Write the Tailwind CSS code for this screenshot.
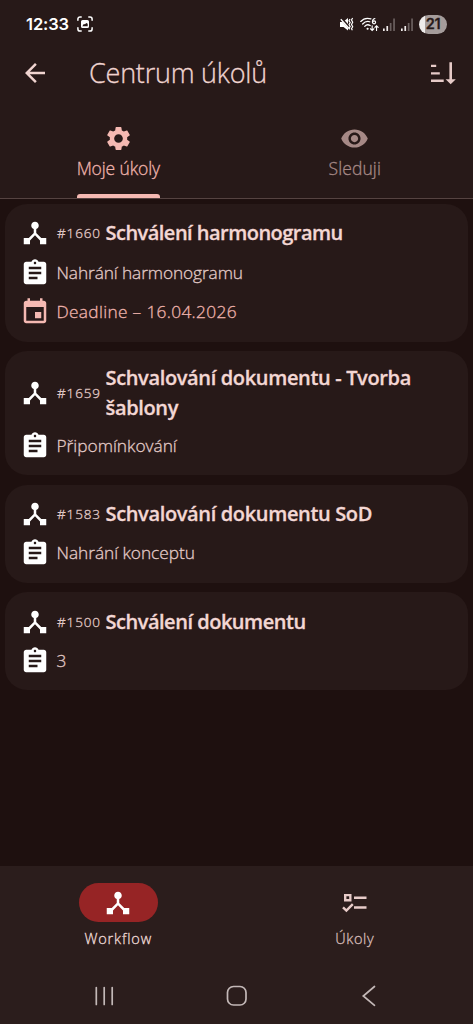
<!DOCTYPE html>
<html lang="cs">
<head>
<meta charset="utf-8">
<title>Centrum úkolů</title>
<script src="https://cdn.jsdelivr.net/npm/@tailwindcss/browser@4"></script>
</head>
<body class="bg-[#1e100f]">
<svg class="hidden">
  <symbol id="hub" viewBox="0 0 24 24"><path d="M17 16l-4-4V8.82C14.16 8.4 15 7.3 15 6c0-1.66-1.34-3-3-3S9 4.34 9 6c0 1.3.84 2.4 2 2.82V12l-4 4H3v5h5v-3.05l4-4.2 4 4.2V21h5v-5h-4z"/></symbol>
  <symbol id="assignment" viewBox="0 0 24 24"><path d="M19 3h-4.18C14.4 1.84 13.3 1 12 1c-1.3 0-2.4.84-2.82 2H5c-1.1 0-2 .9-2 2v14c0 1.1.9 2 2 2h14c1.1 0 2-.9 2-2V5c0-1.1-.9-2-2-2zm-7 0c.55 0 1 .45 1 1s-.45 1-1 1-1-.45-1-1 .45-1 1-1zm2 14H7v-2h7v2zm3-4H7v-2h10v2zm0-4H7V7h10v2z"/></symbol>
  <symbol id="bars" viewBox="0 0 13 13"><path d="M0 10.5h1.7V13H0zM3.4 8h1.7v5H3.4z" fill="#f1eceb"/><path d="M6.8 5h1.7v8H6.8zM10.2 0.5h1.7V13h-1.7z" fill="#6b605f"/></symbol>
</svg>
<div class="flex h-[1024px] w-[473px] flex-col overflow-hidden font-['Open_Sans',sans-serif] font-light text-[#e2cac7] [-webkit-text-stroke:0.3px_currentColor]">
  <header class="flex h-[199px] shrink-0 flex-col border-b border-[#554341] bg-[#271918]">
    <div class="flex h-12 items-center justify-between pr-[26px] pl-[26px]">
      <div class="flex items-center gap-[8px]">
        <span class="font-['Inter','Open_Sans',sans-serif] text-[16.5px] leading-5 font-semibold tracking-[-0.1px] text-white [-webkit-text-stroke:0px]">12:33</span>
        <svg class="h-4 w-4" viewBox="0 0 16 16" fill="none" stroke="#fff" stroke-width="1.5" stroke-linecap="round"><path d="M.9 4.2V3A2.1 2.1 0 0 1 3 .9h1.2M11.8.9H13A2.1 2.1 0 0 1 15.1 3v1.2M15.1 11.8V13a2.1 2.1 0 0 1-2.1 2.1h-1.2M4.2 15.1H3A2.1 2.1 0 0 1 .9 13v-1.2"/><path fill="#fff" stroke="none" fill-rule="evenodd" d="M5.6 4h4.8A1.6 1.6 0 0 1 12 5.6v4.8a1.6 1.6 0 0 1-1.6 1.6H5.6A1.6 1.6 0 0 1 4 10.4V5.6A1.6 1.6 0 0 1 5.6 4zM5.3 10.3h5.4V7.8L9.3 7.1 8 8.3 6.8 8z"/></svg>
      </div>
      <div class="flex items-center">
        <svg class="mr-[6px] h-[15px] w-[14px]" viewBox="0 0 14 15"><path fill="#fff" d="M0 5h3l5-4v12.5L3.5 10H0z"/><path d="M.8 1.2l11 12" stroke="#271918" stroke-width="2.6"/><path d="M.8 2.2l9 10" stroke="#fff" stroke-width="1.3"/><path d="M10 2l-1 1.7 1.2 1.9L9 7.5l1.2 1.9L9.2 11M12.6 1l-1.1 2 1.2 2.2-1.2 2.3 1.2 2.2-1.2 2.1.9 1.5" fill="none" stroke="#fff" stroke-width="1.2"/></svg>
        <svg class="mr-[4px] h-[15px] w-[19px]" viewBox="0 0 20 15" fill="none" stroke="#fff" stroke-width="1.3" stroke-linecap="round"><path d="M.8 4.3C4 .8 8 .4 11.5 1.6M2.8 7C5.3 4.2 8 3.9 10.3 4.6M5 9.5c1.6-1.9 4-2 5.700-.9"/><circle cx="8" cy="12" r=".5" fill="#fff"/><path d="M15.6 1.200c-2 .4-2.6 2-2.5 4"/><circle cx="14.8" cy="5.2" r="1.6"/><path d="M12.8 9v4.500M11 12l1.800 1.800L14.600 12M17.400 13.800V9M15.700 10.600l1.700-1.700 1.700 1.700" stroke-width="1.2"/></svg>
        <svg class="mr-[5px] h-[13px] w-[13px]"><use href="#bars"/></svg>
        <svg class="mr-[5px] h-[13px] w-[13px]"><use href="#bars"/></svg>
        <div class="flex h-[19px] w-[28px] items-center justify-center rounded-full bg-linear-to-r from-[#eeebea] from-21% to-[#a59c9b] to-21% font-['Inter','Open_Sans',sans-serif] text-[14.5px] leading-none font-semibold tracking-[-0.3px] text-[#271918]">21</div>
      </div>
    </div>
    <div class="flex h-[50px] items-center pr-[17px] pl-[19.500px]">
      <svg class="h-[30px] w-[30px]" viewBox="0 0 24 24" fill="#f0d4d0"><path d="M20 11H7.830l5.590-5.590L12 4l-8 8 8 8 1.410-1.410L7.830 13H20v-2z"/></svg>
      <h1 class="ml-[39.500px] flex-1 text-[27px] leading-[36px] tracking-[-0.220px] text-[#f0d4d0]">Centrum úkolů</h1>
      <svg class="h-[26px] w-[27px]" viewBox="0 0 27 26" fill="#e6cac7"><path d="M2 4.800h5.200v2.300H2zM2 12.200h8.800v2.300H2zM2 19.600h12.700v2.300H2zM20.400 2.200h2.600v17h3.800l-5.100 5-5.100-5h3.800z"/></svg>
    </div>
    <nav class="flex flex-1">
      <div class="flex w-1/2 flex-col items-center pt-[26px] text-[#f5b9b2]">
        <svg class="h-[29px] w-[29px]" viewBox="0 0 24 24" fill="currentColor"><path d="M19.140 12.940c.04-.3.060-.61.060-.94 0-.32-.02-.64-.07-.94l2.030-1.580c.18-.14.23-.41.12-.61l-1.920-3.320c-.12-.22-.37-.29-.59-.22l-2.390.96c-.5-.38-1.030-.7-1.620-.94l-.36-2.540c-.04-.24-.24-.41-.48-.41h-3.840c-.24 0-.43.17-.47.41l-.36 2.540c-.59.24-1.130.57-1.620.94l-2.390-.96c-.22-.08-.47 0-.59.22L2.740 8.870c-.12.21-.08.47.12.61l2.030 1.580c-.05.3-.09.63-.09.94s.02.64.07.94l-2.030 1.580c-.18.14-.23.41-.12.61l1.920 3.320c.12.22.37.29.59.22l2.390-.96c.5.38 1.030.7 1.620.94l.36 2.540c.05.24.24.41.48.41h3.840c.24 0 .44-.17.47-.41l.36-2.540c.59-.24 1.130-.56 1.620-.94l2.390.96c.22.08.47 0 .59-.22l1.920-3.320c.12-.22.070-.47-.12-.61l-2.010-1.580zM12 15.600c-1.980 0-3.600-1.620-3.600-3.600s1.620-3.600 3.600-3.600 3.600 1.620 3.600 3.600-1.620 3.600-3.600 3.600z"/></svg>
        <span class="mt-[2.500px] text-[17.500px] leading-6 tracking-[-0.130px] text-[#eeb3ac]">Moje úkoly</span>
        <span class="mt-auto h-1 w-[83px] rounded-t-[3px] bg-[#f5b9b2]"></span>
      </div>
      <div class="flex w-1/2 flex-col items-center pt-[26px] text-[#a68986]">
        <svg class="h-[29px] w-[29px]" viewBox="0 0 24 24" fill="currentColor"><path d="M12 4.500C7 4.500 2.730 7.610 1 12c1.730 4.390 6 7.500 11 7.500s9.270-3.110 11-7.500c-1.730-4.390-6-7.500-11-7.500zM12 17c-2.760 0-5-2.240-5-5s2.240-5 5-5 5 2.240 5 5-2.240 5-5 5zm0-8c-1.660 0-3 1.340-3 3s1.340 3 3 3 3-1.340 3-3-1.340-3-3-3z"/></svg>
        <span class="mt-[2.500px] text-[17.500px] leading-6 tracking-[0.080px]">Sleduji</span>
      </div>
    </nav>
  </header>

  <main class="flex flex-1 flex-col gap-[9.800px] px-[5px] pt-[5px] text-[17.300px] leading-6 tracking-[-0.100px]">
    <section class="rounded-[22px] bg-[#271918] px-[14.500px] py-[9.500px]">
      <div class="flex h-[39.500px] items-center">
        <svg class="h-[30px] w-[30px] shrink-0 fill-white"><use href="#hub"/></svg>
        <span class="ml-[7.500px] w-[48.500px] shrink-0 text-[13.500px] tracking-[0.850px]">#1660</span>
        <h2 class="text-[20px] leading-[30px] font-semibold tracking-[-0.520px] text-[#f3d7d4]">Schválení harmonogramu</h2>
      </div>
      <div class="flex h-[39.500px] items-center">
        <svg class="h-[30px] w-[30px] shrink-0 fill-white"><use href="#assignment"/></svg>
        <span class="ml-[7px]">Nahrání harmonogramu</span>
      </div>
      <div class="flex h-[39.500px] items-center text-[#eeb3ac]">
        <svg class="h-[30px] w-[30px] shrink-0 fill-[#f5b9b2]" viewBox="0 0 24 24"><path d="M17 12h-5v5h5v-5zM16 1v2H8V1H6v2H5c-1.110 0-1.990.9-1.990 2L3 19c0 1.100.89 2 2 2h14c1.100 0 2-.9 2-2V5c0-1.100-.9-2-2-2h-1V1h-2zm3 18H5V8h14v11z"/></svg>
        <span class="ml-[7px] tracking-[0.330px]">Deadline – 16.04.2026</span>
      </div>
    </section>

    <section class="rounded-[22px] bg-[#271918] px-[14.500px] py-[9.500px]">
      <div class="flex h-[65px] items-center">
        <svg class="h-[30px] w-[30px] shrink-0 fill-white"><use href="#hub"/></svg>
        <span class="ml-[7.500px] w-[48.500px] shrink-0 text-[13.500px] tracking-[0.850px]">#1659</span>
        <h2 class="text-[20px] leading-[30px] font-semibold tracking-[-0.350px] text-[#f3d7d4]">Schvalování dokumentu - Tvorba<br>šablony</h2>
      </div>
      <div class="flex h-[39.500px] items-center">
        <svg class="h-[30px] w-[30px] shrink-0 fill-white"><use href="#assignment"/></svg>
        <span class="ml-[7px] tracking-[0px]">Připomínkování</span>
      </div>
    </section>

    <section class="rounded-[22px] bg-[#271918] px-[14.500px] py-[9.500px]">
      <div class="flex h-[39.500px] items-center">
        <svg class="h-[30px] w-[30px] shrink-0 fill-white"><use href="#hub"/></svg>
        <span class="ml-[7.500px] w-[48.500px] shrink-0 text-[13.500px] tracking-[0.850px]">#1583</span>
        <h2 class="text-[20px] leading-[30px] font-semibold tracking-[-0.350px] text-[#f3d7d4]">Schvalování dokumentu SoD</h2>
      </div>
      <div class="flex h-[39.500px] items-center">
        <svg class="h-[30px] w-[30px] shrink-0 fill-white"><use href="#assignment"/></svg>
        <span class="ml-[7px] tracking-[-0.040px]">Nahrání konceptu</span>
      </div>
    </section>

    <section class="rounded-[22px] bg-[#271918] px-[14.500px] py-[9.500px]">
      <div class="flex h-[39.500px] items-center">
        <svg class="h-[30px] w-[30px] shrink-0 fill-white"><use href="#hub"/></svg>
        <span class="ml-[7.500px] w-[48.500px] shrink-0 text-[13.500px] tracking-[0.850px]">#1500</span>
        <h2 class="text-[20px] leading-[30px] font-semibold tracking-[-0.480px] text-[#f3d7d4]">Schválení dokumentu</h2>
      </div>
      <div class="flex h-[39.500px] items-center">
        <svg class="h-[30px] w-[30px] shrink-0 fill-white"><use href="#assignment"/></svg>
        <span class="ml-[7px]">3</span>
      </div>
    </section>
  </main>

  <footer class="flex h-[158px] shrink-0 flex-col bg-[#2b1d1c]">
    <div class="flex h-[102px] pt-[17px] text-[14.500px] leading-5">
      <div class="flex w-1/2 flex-col items-center gap-[7px]">
        <div class="flex h-[39px] w-[79px] items-center justify-center rounded-full bg-[#962425]">
          <svg class="h-[30px] w-[30px] fill-white"><use href="#hub"/></svg>
        </div>
        <span class="tracking-[0.850px] text-[#efdbd8]">Workflow</span>
      </div>
      <div class="flex w-1/2 flex-col items-center gap-[7px]">
        <div class="flex h-[39px] items-center">
          <svg class="h-[20px] w-[26px]" viewBox="0 0 26 20" fill="#e8ccc9"><path fill-rule="evenodd" d="M2 1h7.500v7.500H2zM4.400 3.300v2.800h2.800V3.300zM12 3.500h12.500V6H12zM12 13.200h12.500v2.500H12z"/><path d="M1 14.300l3.400 3.300 6.400-6.400" fill="none" stroke="#e8ccc9" stroke-width="2.400"/></svg>
        </div>
        <span class="tracking-[0.600px] text-[#d8bdba]">Úkoly</span>
      </div>
    </div>
    <div class="flex h-[56px] items-center justify-between px-[94px]">
      <svg class="h-[20px] w-[20px]" viewBox="0 0 20 20" stroke="#c3b8b7" stroke-width="1.700" stroke-linecap="round"><path d="M2.300 1.500v17M10.200 1.500v17M18.200 1.500v17"/></svg>
      <svg class="h-[22px] w-[22px]" viewBox="0 0 22 22" fill="none" stroke="#c3b8b7" stroke-width="1.700"><rect x="1.500" y="1.500" width="18.500" height="18.500" rx="6"/></svg>
      <svg class="h-[22px] w-[20px]" viewBox="0 0 20 22" fill="none" stroke="#c3b8b7" stroke-width="1.700" stroke-linecap="round"><path d="M15.500 1.500L4.300 11l11.200 9.300"/></svg>
    </div>
  </footer>
</div>
</body>
</html>
